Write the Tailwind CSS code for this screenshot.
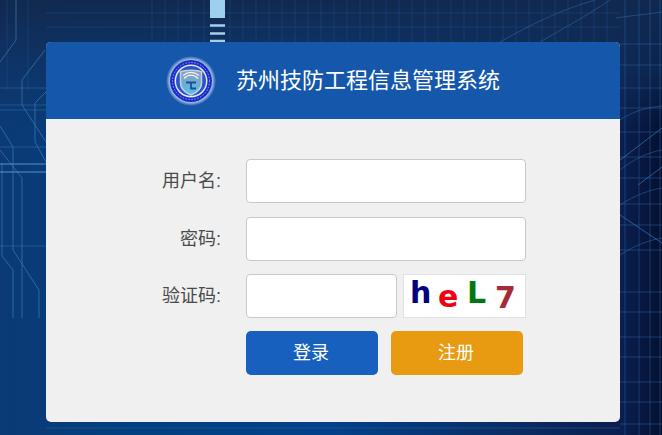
<!DOCTYPE html>
<html lang="zh">
<head>
<meta charset="utf-8">
<script src="https://cdn.jsdelivr.net/npm/@tailwindcss/browser@4"></script>
<title>苏州技防工程信息管理系统</title>
</head>
<body class="m-0">
<div class="relative w-[662px] h-[435px] overflow-hidden bg-[linear-gradient(90deg,#0b3a75_0%,#023f80_20%,#02418a_50%,#0a2c63_78%,#0a1f4f_94%,#04102f_100%)] font-['Liberation_Sans','Noto_Sans_CJK_SC',sans-serif]">
  <div class="absolute inset-x-0 top-0 h-[130px] bg-[linear-gradient(180deg,#11294f_0%,#11315f99_55%,#11315f00_100%)]"></div>
  <svg class="absolute inset-0" width="662" height="435" viewBox="0 0 662 435" fill="none">
    <g stroke="#2a5f9e" stroke-opacity=".3" stroke-width="1">
      <path d="M152 0V42M165 0V42M178 0V42M191 0V42M204 0V42M230 0V42M243 0V42M256 0V42M269 0V42M282 0V42M295 0V42M308 0V42M321 0V42M334 0V42M347 0V42M360 0V42M373 0V42M386 0V42M399 0V42M412 0V42M425 0V42M438 0V42M451 0V42M464 0V42M477 0V42M490 0V42M503 0V42M516 0V42M529 0V42M542 0V42M555 0V42M568 0V42M581 0V42M594 0V42M607 0V42"/>
      <path d="M46 13H620M46 27H620"/>
      <path d="M7 0V90M28 0V90"/>
    </g>
    <g stroke="#2c609f" stroke-opacity=".5" stroke-width="1">
      <path d="M625 0V435M639 0V435M650 0V435M660 0V435"/>
      <path d="M620 44H662M620 65H662M620 88H662M620 108H662M620 132H662M620 157H662M620 178H662M620 204H662M620 225H662M620 250H662M620 292H662M620 312H662M620 337H662M620 357H662M620 382H662M620 402H662M620 424H662"/>
      <path d="M46 428H620"/>
    </g>
    <g stroke="#2f6fb0" stroke-opacity=".5" stroke-width="1">
      <path d="M620 120C635 110 650 107 662 106M620 170C635 158 650 152 662 150M620 205C635 195 650 190 662 188M620 255C635 245 650 240 662 238"/>
      <path d="M616 18C635 15 650 14 662 12"/>
      <path d="M500 42C530 25 560 10 595 0M540 42C560 30 580 20 610 0"/>
    </g>
    <g stroke="#3a82bd" stroke-opacity=".65" stroke-width="1">
      <path d="M16 0V40L0 62M45 50L22 80V105L46 142M46 92L35 103V142L46 162M0 126L13 147V250L39 290V318M0 150L22 178V318M2 163V256L13 270V318"/>
      <path d="M620 160L662 128M638 185L662 167M620 215L662 243"/>
    </g>
    <path d="M0 88H46M0 105H46M0 110H46M0 147H46M0 246H46" stroke="#3a78b5" stroke-opacity=".45"/>
    <path d="M0 164H46M0 172H46" stroke="#5d9fd0" stroke-opacity=".6" stroke-width="1.500"/>
    <rect x="210" y="0" width="15" height="18" fill="#9dd0ec"/>
    <path d="M210 25.500H225M210 33.500H225M210 41H225" stroke="#a6cfe6" stroke-width="2.500"/>
  </svg>

  <div class="relative pt-[42px] pl-[46px]">
    <div class="w-[574px] h-[380px] rounded-[5px] overflow-hidden bg-[#f0f0f0]">
      <header class="h-[77px] bg-[#1557ab] flex items-center pl-[120px]">
        <svg width="50" height="50" viewBox="0 0 50 50" class="shrink-0">
          <defs>
            <radialGradient id="halo"><stop offset=".78" stop-color="#e8eef8"/><stop offset="1" stop-color="#e8eef8" stop-opacity="0"/></radialGradient>
            <linearGradient id="sh" x1="0" y1="0" x2="0" y2="1"><stop offset="0" stop-color="#8f9bb5"/><stop offset="1" stop-color="#4fc0ea"/></linearGradient>
          </defs>
          <circle cx="25" cy="25" r="25" fill="url(#halo)"/>
          <circle cx="25" cy="25" r="21" fill="#1a2cc8"/>
          <circle cx="25" cy="25" r="18.500" fill="none" stroke="#8fa6ee" stroke-width="1" stroke-dasharray="1.500 1.500"/>
          <circle cx="25" cy="25" r="16.500" fill="#dfe8f8"/>
          <circle cx="25" cy="25" r="15" fill="#2a55cc"/>
          <path d="M14.500 16C19 13.500 31 13.500 35.500 16V27C35.500 33 30 37 25 39C20 37 14.500 33 14.500 27Z" fill="url(#sh)" stroke="#c9cfdd" stroke-width="1.500"/>
          <path d="M18 22.500C22 18 28 18 32 22.500M17 19.500C22 15.500 28 15.500 33 19.500" fill="none" stroke="#eef3fa" stroke-width="1.200"/>
          <path d="M20 26.500H30M25 26.500V32.500H30" fill="none" stroke="#1d4f9c" stroke-width="1.800"/>
        </svg>
        <h1 class="ml-[20px] text-[22px] leading-none font-normal text-white">苏州技防工程信息管理系统</h1>
      </header>

      <form class="pt-[40px] pl-[105px] text-[#4a4a4a] text-[18px]">
        <div class="flex items-center h-[44px]">
          <label class="w-[95px] pr-[25px] text-right whitespace-nowrap">用户名:</label>
          <input class="w-[280px] h-[44px] rounded-[4px] border border-[#c8c8c8] bg-white">
        </div>
        <div class="flex items-center h-[44px] mt-[14px]">
          <label class="w-[95px] pr-[25px] text-right whitespace-nowrap">密码:</label>
          <input class="w-[280px] h-[44px] rounded-[4px] border border-[#c8c8c8] bg-white">
        </div>
        <div class="flex items-center h-[44px] mt-[13px]">
          <label class="w-[95px] pr-[25px] text-right whitespace-nowrap">验证码:</label>
          <input class="w-[151px] h-[44px] rounded-[4px] border border-[#c8c8c8] bg-white">
          <div class="ml-[6px] w-[123px] h-[44px] bg-white border border-[#e0e0e6] relative font-bold font-['DejaVu_Sans',sans-serif] leading-none text-[30px]">
            <span class="absolute left-[6px] top-[3px] text-[#000080]">h</span>
            <span class="absolute left-[34px] top-[7px] text-[#f00010]">e</span>
            <span class="absolute left-[63px] top-[3px] text-[#007a10]">L</span>
            <span class="absolute left-[91px] top-[8px] text-[#a52a3a]">7</span>
          </div>
        </div>
        <div class="flex mt-[13px] ml-[95px] gap-[13px]">
          <button type="button" class="w-[132px] h-[44px] pr-[2px] rounded-[5px] bg-[#1760bd] text-white text-[18px]">登录</button>
          <button type="button" class="w-[132px] h-[44px] pr-[2px] rounded-[5px] bg-[#e89a10] text-white text-[18px]">注册</button>
        </div>
      </form>
    </div>
  </div>
</div>
</body>
</html>
